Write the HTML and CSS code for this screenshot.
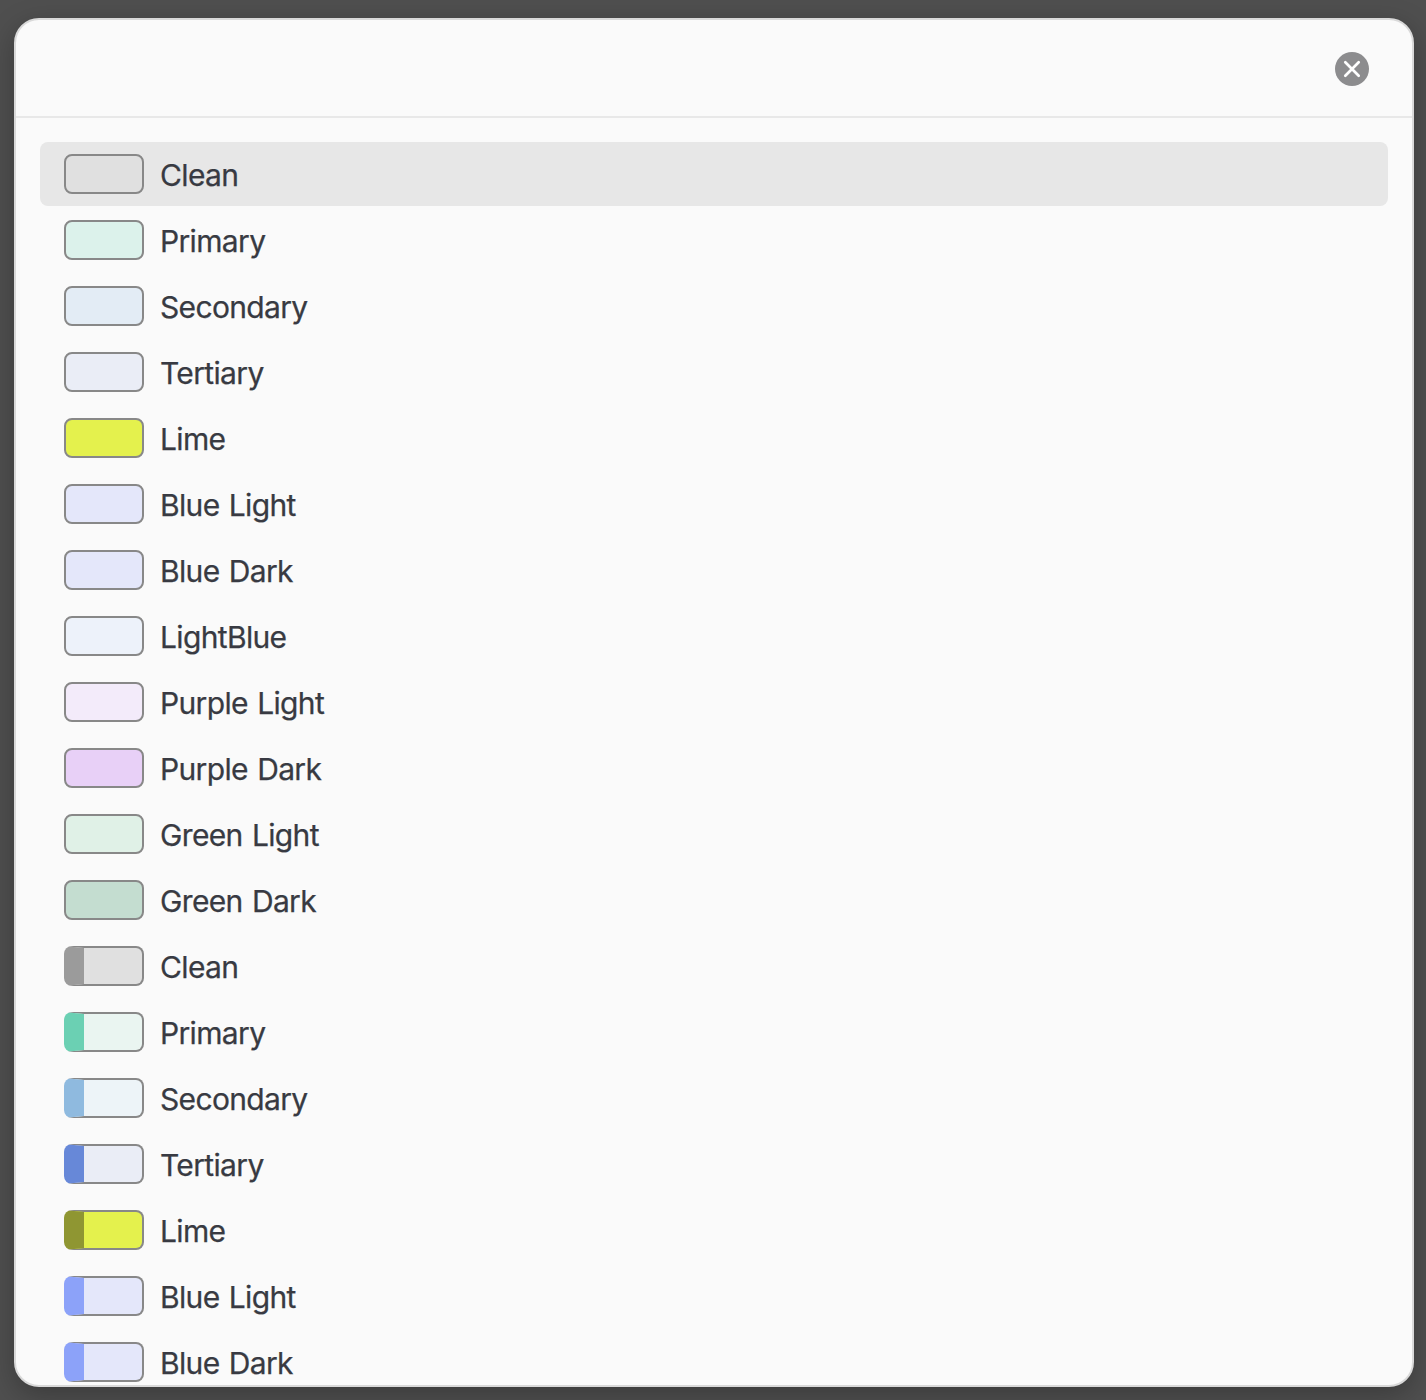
FILE: index.html
```html
<!DOCTYPE html>
<html lang="en">
<head>
<meta charset="utf-8">
<title>Styles</title>
<link rel="stylesheet" href="styles.css">
</head>
<body>
<div class="modal">
  <header class="modal-header">
    <button class="close" aria-label="Close">
      <svg width="34" height="34" viewBox="0 0 34 34"><circle cx="17" cy="17" r="17" fill="#8c8c8e"/><path d="M10.300 10.300l13.400 13.400M23.700 10.300l-13.400 13.400" stroke="#fff" stroke-width="2.700" stroke-linecap="round"/></svg>
    </button>
  </header>
  <ul class="list">
    <li class="row selected"><span class="swatch clean"></span><span class="name">Clean</span></li>
    <li class="row"><span class="swatch primary"></span><span class="name">Primary</span></li>
    <li class="row"><span class="swatch secondary"></span><span class="name">Secondary</span></li>
    <li class="row"><span class="swatch tertiary"></span><span class="name">Tertiary</span></li>
    <li class="row"><span class="swatch lime"></span><span class="name">Lime</span></li>
    <li class="row"><span class="swatch blue"></span><span class="name">Blue Light</span></li>
    <li class="row"><span class="swatch blue"></span><span class="name">Blue Dark</span></li>
    <li class="row"><span class="swatch lightblue"></span><span class="name">LightBlue</span></li>
    <li class="row"><span class="swatch purple-light"></span><span class="name">Purple Light</span></li>
    <li class="row"><span class="swatch purple-dark"></span><span class="name">Purple Dark</span></li>
    <li class="row"><span class="swatch green-light"></span><span class="name">Green Light</span></li>
    <li class="row"><span class="swatch green-dark"></span><span class="name">Green Dark</span></li>
    <li class="row"><span class="swatch bar clean"></span><span class="name">Clean</span></li>
    <li class="row"><span class="swatch bar primary"></span><span class="name">Primary</span></li>
    <li class="row"><span class="swatch bar secondary"></span><span class="name">Secondary</span></li>
    <li class="row"><span class="swatch bar tertiary"></span><span class="name">Tertiary</span></li>
    <li class="row"><span class="swatch bar lime"></span><span class="name">Lime</span></li>
    <li class="row"><span class="swatch bar blue"></span><span class="name">Blue Light</span></li>
    <li class="row"><span class="swatch bar blue"></span><span class="name">Blue Dark</span></li>
  </ul>
</div>
</body>
</html>
```
FILE: styles.css
```css
* { box-sizing: border-box; }
body {
  margin: 0;
  height: 1400px;
  padding: 18px 12px 13px 14px;
  background: #4f4f4f;
  overflow: hidden;
  font-family: Inter, "Liberation Sans", sans-serif;
}
.modal {
  height: 1369px;
  display: flex;
  flex-direction: column;
  background: #fafafa;
  border: 2px solid #d9d9d9;
  border-radius: 25px;
  overflow: hidden;
  box-shadow: 0 8px 28px rgba(0, 0, 0, .26);
}
.modal-header {
  flex: none;
  height: 98px;
  display: flex;
  align-items: center;
  justify-content: flex-end;
  padding: 2px 43px 0 0;
  border-bottom: 2px solid #e8e8e8;
}
.close { display: block; border: 0; padding: 0; background: none; }
.close svg { display: block; fill: none; }
.list {
  list-style: none;
  margin: 0;
  padding: 24px;
  display: flex;
  flex-direction: column;
  gap: 2px;
}
.row {
  flex: none;
  height: 64px;
  display: flex;
  align-items: center;
  gap: 16px;
  padding: 0 24px;
  border-radius: 8px;
  color: #383a42;
}
.selected { background: #e7e7e7; }
.swatch {
  width: 80px;
  height: 40px;
  border: 2px solid #888;
  border-radius: 8px;
}
.name {
  font-size: 30px;
  line-height: 40px;
  letter-spacing: -0.65px;
  word-spacing: 1.5px;
  padding-top: 1px;
  -webkit-text-stroke: .25px #383a42;
}
.bar { border-left-width: 20px; }
.clean { background: #e0e0e0; }
.primary { background: #dcf2eb; }
.secondary { background: #e3ecf5; }
.tertiary { background: #eaedf6; }
.lime { background: #e4f14d; }
.blue { background: #e4e7fa; }
.lightblue { background: #edf2fa; }
.purple-light { background: #f3ebfa; }
.purple-dark { background: #e8d0f7; }
.green-light { background: #e0f1e7; }
.green-dark { background: #c4ddd0; }
.bar.clean { border-left-color: #9b9b9b; }
.bar.primary { background: #eaf5f1; border-left-color: #6bd0b3; }
.bar.secondary { background: #edf4f8; border-left-color: #8fbadf; }
.bar.tertiary { border-left-color: #6788d8; }
.bar.lime { border-left-color: #8f9632; }
.bar.blue { border-left-color: #8ca2f9; }
```
